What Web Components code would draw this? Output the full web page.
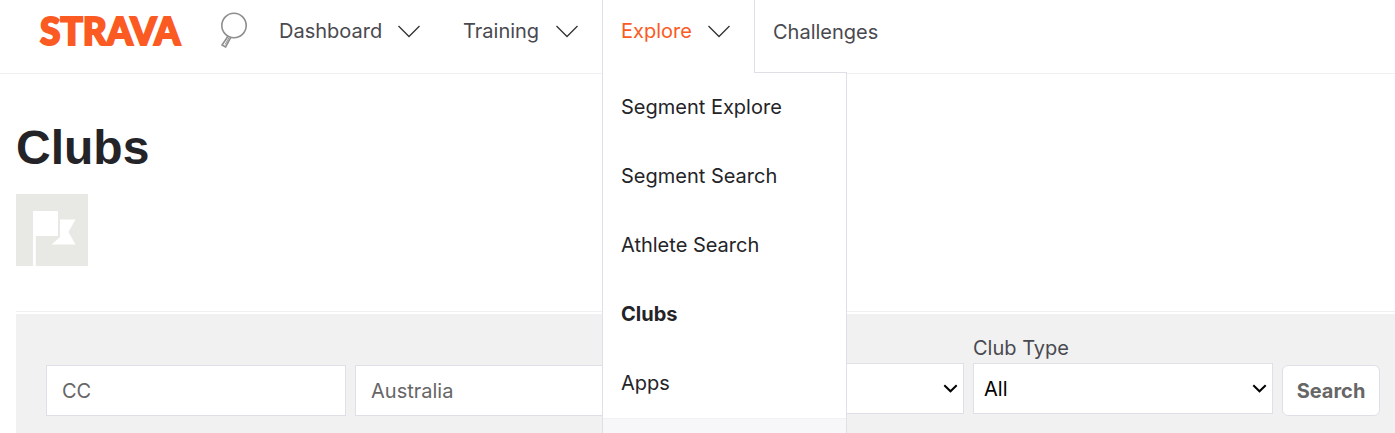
<!DOCTYPE html>
<html lang="en">
<head>
<meta charset="utf-8">
<meta name="viewport" content="width=device-width, initial-scale=1">
<title>Clubs | Strava</title>
<style>
  body {
    margin: 0;
    background: #fff;
    color: #242428;
    font: 20px/24px Inter, "Liberation Sans", sans-serif;
    overflow-x: hidden;
    --line: #dfdfe8;
    --brand: #fb5a23;
  }
</style>
</head>
<body>
<clubs-page></clubs-page>

<script>
function define(name, html) {
  const template = document.createElement('template');
  template.innerHTML = html;
  customElements.define(name, class extends HTMLElement {
    constructor() {
      super();
      this.attachShadow({ mode: 'open' }).append(template.content.cloneNode(true));
    }
  });
}

define('brand-logo', `
  <style>
    :host { display: block; }
    a { display: block; color: var(--brand); text-decoration: none;
        font: 900 37px/62px Lato, sans-serif; -webkit-text-stroke: 2px var(--brand); }
  </style>
  <a href="#"><slot></slot></a>`);

define('search-toggle', `
  <style>
    :host { display: block; }
    button { display: block; padding: 0; border: 0; background: none; }
    svg { display: block; }
  </style>
  <button type="button" aria-label="Search">
    <svg width="28" height="36" viewBox="0 0 28 36" fill="none" stroke="#8e8e8e" stroke-width="1.6">
      <circle cx="14" cy="13.5" r="12.2"/>
      <path d="M8.200 24 2 33 5.600 35 10.800 25.400"/>
      <path d="M9 25.500 5.200 32.500" stroke-width="1"/>
    </svg>
  </button>`);

define('nav-item', `
  <style>
    :host { display: block; box-sizing: border-box; height: 74px; padding: 0 24px 0 19px; color: #494950; }
    a { display: flex; justify-content: space-between; align-items: center;
        height: 62px; color: inherit; text-decoration: none; white-space: nowrap; }
    svg { flex: none; }
    :host([open]) { position: relative; color: var(--brand); background: #fff;
        border: solid var(--line); border-width: 0 1px; padding-left: 18px; }
    :host([plain]) { padding-top: 1px; padding-left: 18px; }
    :host([plain]) svg { display: none; }
    /* hides the panel's top edge below the open tab */
    :host([open])::after { content: ""; position: absolute; left: 0; right: 0; top: 70px; height: 4px;
        background: #fff; z-index: 2; }
  </style>
  <a href="#"><span><slot></slot></span>
    <svg width="22" height="13" viewBox="0 0 22 13" fill="none" stroke="#333" stroke-width="1.300"><path d="M.5 1 11 11.500 21.500 1"/></svg>
  </a>
  <slot name="menu"></slot>`);

define('nav-menu', `
  <style>
    :host { display: block; position: absolute; top: 72px; left: -1px; z-index: 1; width: 243px;
        background: #fff; border: solid var(--line); border-width: 1px 1px 0; color: #242428; }
    footer { height: 14px; background: #f7f7fa; border-top: 1px solid #f0f0f5; }
  </style>
  <nav aria-label="Explore"><slot></slot></nav>
  <footer></footer>`);

define('menu-link', `
  <style>
    :host { display: block; }
    a { display: block; padding: 0 18px; line-height: 69px; color: inherit; text-decoration: none; }
    :host([current]) a { font-weight: 700; }
  </style>
  <a href="#"><slot></slot></a>`);

define('site-header', `
  <style>
    :host { display: block; height: 73px; border-bottom: 1px solid #f0f0f2; padding-left: 40px; }
    nav { display: grid; grid-template-columns: 180px 40px 184px 158px 153px auto 1fr; align-items: start; }
    search-toggle { padding-top: 12px; }
  </style>
  <nav aria-label="Main">
    <brand-logo>STRAVA</brand-logo>
    <search-toggle></search-toggle>
    <nav-item>Dashboard</nav-item>
    <nav-item>Training</nav-item>
    <nav-item open>Explore
      <nav-menu slot="menu">
        <menu-link>Segment Explore</menu-link>
        <menu-link>Segment Search</menu-link>
        <menu-link>Athlete Search</menu-link>
        <menu-link current>Clubs</menu-link>
        <menu-link>Apps</menu-link>
      </nav-menu>
    </nav-item>
    <nav-item plain>Challenges</nav-item>
  </nav>`);

define('club-avatar', `
  <style>:host { display: block; } svg { display: block; }</style>
  <svg width="72" height="72" viewBox="0 0 72 72" role="img" aria-label="Club">
    <path fill="#e8e8e4" d="M0 0h72v72H0z"/>
    <path fill="#fff" d="M17 17h25v25H19.800v30H17z"/>
    <path fill="#fff" d="M44 25.500h15.500L52.500 38l7 12.500h-24L44 43z"/>
  </svg>`);

define('text-field', `
  <style>
    :host { display: block; min-width: 0; }
    input { display: block; box-sizing: border-box; width: 100%; height: 51px; padding: 0 15px;
        border: 1px solid var(--line); background: #fff; color: #666; font: inherit; }
  </style>
  <input type="text">`);

define('select-field', `
  <style>
    :host { display: block; min-width: 0; padding-bottom: 2px; color: #494950; }
    label { display: block; height: 27px; }
    .box { display: grid; align-items: center; }
    select, svg { grid-area: 1 / 1; }
    select { appearance: none; box-sizing: border-box; width: 100%; height: 51px; padding: 0 10px;
        border: 1px solid var(--line); border-radius: 0; background: #fff; color: #000; font: inherit; }
    svg { justify-self: end; margin-right: 6px; pointer-events: none; }
  </style>
  <label for="s"><slot></slot></label>
  <div class="box">
    <select id="s"><option></option></select>
    <svg width="15" height="9" viewBox="0 0 15 9" fill="none" stroke="#000" stroke-width="2"><path d="M1.300 1.300 7.500 7.300 13.700 1.300"/></svg>
  </div>`);

define('search-button', `
  <style>
    :host { display: block; }
    button { display: block; box-sizing: border-box; width: 100%; height: 51px; padding: 0;
        border: 1px solid var(--line); border-radius: 6px; background: #fff; color: #666;
        font: inherit; font-weight: 700; }
  </style>
  <button type="submit"><slot></slot></button>`);

define('club-search', `
  <style>
    :host { display: block; border-top: 1px solid #f0f0f0; padding-top: 2px; }
    form { display: grid; grid-template-columns: repeat(4, minmax(0, 1fr)) 98px; gap: 9px;
        align-items: end; padding: 22px 15px 17px 30px; background: #f1f1f1; }
  </style>
  <form>
    <text-field data-label="Club name" data-value="CC"></text-field>
    <text-field data-label="Location" data-value="Australia"></text-field>
    <select-field data-label="Sport" data-value="All"></select-field>
    <select-field data-value="All">Club Type</select-field>
    <search-button>Search</search-button>
  </form>`);

define('clubs-page', `
  <style>
    :host { display: block; }
    main { display: block; padding-left: 16px; }
    h1 { margin: 0; padding: 44px 0 16px; font: 700 48px/60px "Liberation Sans", sans-serif; }
    club-avatar { margin-bottom: 45px; }
  </style>
  <site-header></site-header>
  <main>
    <h1>Clubs</h1>
    <club-avatar></club-avatar>
    <club-search></club-search>
  </main>`);

/* pass each field's label and value on to its control */
const form = document.querySelector('clubs-page').shadowRoot.querySelector('club-search').shadowRoot;
form.querySelectorAll('[data-value]').forEach(field => {
  const control = field.shadowRoot.querySelector('input, select');
  if (field.dataset.label) control.setAttribute('aria-label', field.dataset.label);
  if (control.tagName === 'SELECT') control.options[0].textContent = field.dataset.value;
  else control.value = field.dataset.value;
});
</script>
</body>
</html>
